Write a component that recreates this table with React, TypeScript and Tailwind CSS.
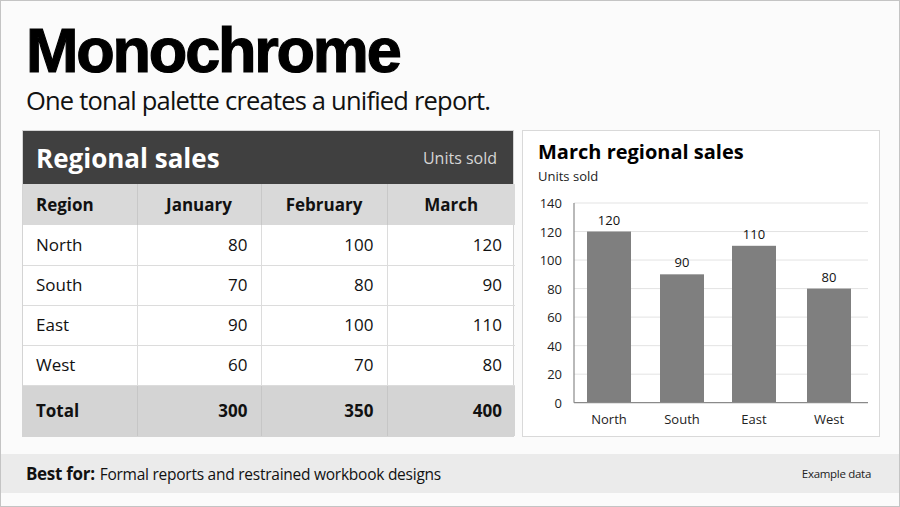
import React from "react";

const rows = [
  { r: "North", j: 80, f: 100, m: 120 },
  { r: "South", j: 70, f: 80, m: 90 },
  { r: "East", j: 90, f: 100, m: 110 },
  { r: "West", j: 60, f: 70, m: 80 },
];

function Chart() {
  const x0 = 51;
  const x1 = 345;
  const y0 = 212.7;
  const k = 1.4264;
  const ticks = [0, 20, 40, 60, 80, 100, 120, 140];
  const bars = [
    { n: "North", v: 120, c: 86 },
    { n: "South", v: 90, c: 159 },
    { n: "East", v: 110, c: 231 },
    { n: "West", v: 80, c: 306 },
  ];
  return (
    <svg width="356" height="246" className="block" style={{ fontFamily: "'Open Sans', sans-serif" }}>
      {ticks.map((t) => {
        const y = y0 - t * k;
        return (
          <g key={t}>
            {t > 0 && <line x1={x0} x2={x1} y1={y} y2={y} stroke="#e3e3e3" strokeWidth="1" />}
            <text x="39" y={y} textAnchor="end" dominantBaseline="central" fontSize="13" fill="#222">
              {t}
            </text>
          </g>
        );
      })}
      {bars.map((b) => {
        const top = y0 - b.v * k;
        return (
          <g key={b.n}>
            <rect x={b.c - 22} y={top} width="44" height={y0 - top} fill="#7f7f7f" />
            <text x={b.c} y={top - 12} textAnchor="middle" dominantBaseline="central" fontSize="13" fill="#111">
              {b.v}
            </text>
            <text x={b.c} y="229" textAnchor="middle" dominantBaseline="central" fontSize="13" fill="#222">
              {b.n}
            </text>
          </g>
        );
      })}
      <line x1={x0} x2={x0} y1="13" y2={y0} stroke="#8a8a8a" strokeWidth="1.2" />
      <line x1={x0} x2={x1} y1={y0} y2={y0} stroke="#8a8a8a" strokeWidth="1.2" />
    </svg>
  );
}

export default function App() {
  return (
    <div
      className="w-[900px] h-[507px] border border-[#c4c4c4] bg-[#fbfbfb] flex flex-col overflow-hidden text-[#111]"
      style={{ fontFamily: "'Open Sans', sans-serif" }}
    >
      <div className="px-[25px] pt-[18px]">
        <h1
          className="text-[63px] leading-none font-bold tracking-[-2.2px] text-black [-webkit-text-stroke:1.2px_black]"
          style={{ fontFamily: "'Liberation Sans', Arial, sans-serif" }}
        >
          Monochrome
        </h1>
        <p className="mt-[3px] text-[25.5px] leading-[30px] tracking-[-0.8px] text-[#111]">
          One tonal palette creates a unified report.
        </p>
      </div>

      <div className="mt-[15px] pl-[21px] flex gap-[8px]">
        <div className="w-[492px] h-[307px] border border-[#d4d4d4] bg-white flex flex-col">
          <div className="h-[53px] bg-[#404040] flex items-center justify-between pl-[13px] pr-[16px]">
            <span className="text-[26px] font-bold text-white leading-none">Regional sales</span>
            <span className="text-[16px] text-[#d6d6d6] leading-none">Units sold</span>
          </div>
          <table className="w-full border-collapse table-fixed text-[17px]">
            <colgroup>
              <col className="w-[114px]" />
              <col className="w-[124px]" />
              <col className="w-[126px]" />
              <col className="w-[128px]" />
            </colgroup>
            <thead>
              <tr className="h-[41px] bg-[#d9d9d9] font-bold">
                <th className="text-left pl-[13px] font-bold">Region</th>
                <th className="text-center border-l border-[#c8c8c8] font-bold">January</th>
                <th className="text-center border-l border-[#c8c8c8] font-bold">February</th>
                <th className="text-center border-l border-[#c8c8c8] font-bold">March</th>
              </tr>
            </thead>
            <tbody>
              {rows.map((r) => (
                <tr key={r.r} className="h-[40px] border-b border-[#dcdcdc]">
                  <td className="pl-[13px]">{r.r}</td>
                  <td className="text-right pr-[13px] border-l border-[#dcdcdc]">{r.j}</td>
                  <td className="text-right pr-[13px] border-l border-[#dcdcdc]">{r.f}</td>
                  <td className="text-right pr-[13px] border-l border-[#dcdcdc]">{r.m}</td>
                </tr>
              ))}
              <tr className="h-[51px] bg-[#d4d4d4] font-bold">
                <td className="pl-[13px]">Total</td>
                <td className="text-right pr-[13px] border-l border-[#c6c6c6]">300</td>
                <td className="text-right pr-[13px] border-l border-[#c6c6c6]">350</td>
                <td className="text-right pr-[13px] border-l border-[#c6c6c6]">400</td>
              </tr>
            </tbody>
          </table>
        </div>

        <div className="w-[358px] h-[307px] border border-[#d9d9d9] bg-white flex flex-col">
          <div className="pl-[15px] pt-[9px]">
            <div className="text-[20px] leading-[24px] font-bold text-black">March regional sales</div>
            <div className="text-[13px] leading-[18px] mt-[3px] text-[#222]">Units sold</div>
          </div>
          <div className="mt-[5px]">
            <Chart />
          </div>
        </div>
      </div>

      <div className="mt-[17px] h-[39px] bg-[#ebebeb] flex items-center justify-between pl-[25px] pr-[28px]">
        <div className="text-[15.5px] tracking-[-0.25px] text-[#111] flex items-baseline">
          <span className="font-bold text-[17px] tracking-[-0.3px] mr-[5px]">Best for:</span>
          <span>Formal reports and restrained workbook designs</span>
        </div>
        <div className="text-[11.5px] tracking-[-0.3px] text-[#222]">Example data</div>
      </div>
    </div>
  );
}
